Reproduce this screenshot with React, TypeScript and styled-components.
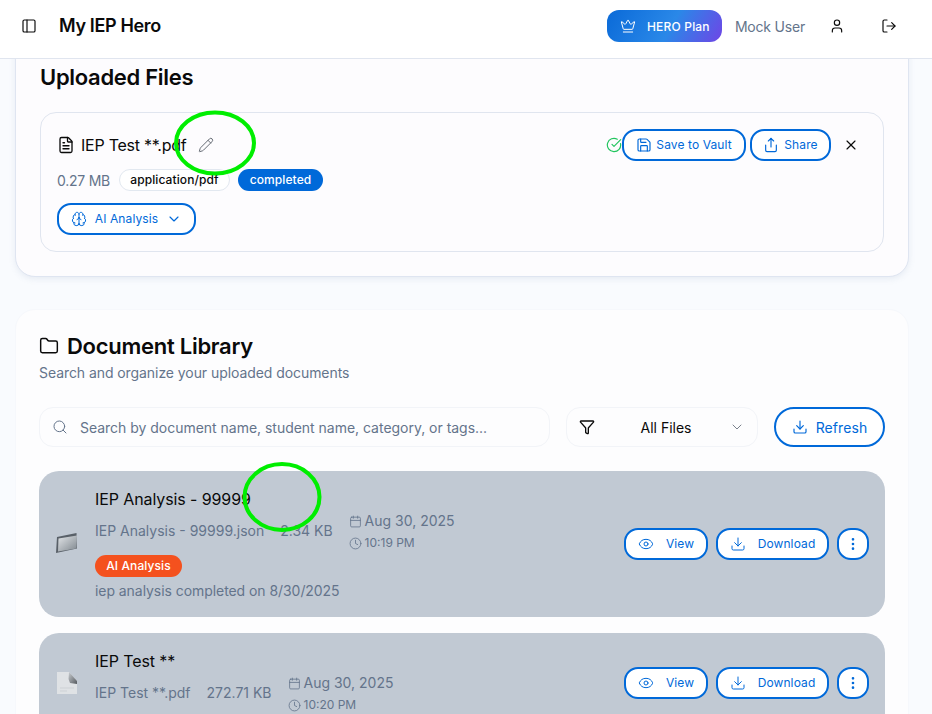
import React from "react";
import styled, { createGlobalStyle } from "styled-components";
import {
  PanelLeft, Crown, User, LogOut, FileText, Pencil, CircleCheckBig, Save, Share, X, Brain,
  ChevronDown, Folder, Search, Funnel, Download, Eye, EllipsisVertical, Calendar, Clock,
} from "lucide-react";

const Global = createGlobalStyle`
  html, body { margin: 0; padding: 0; height: 100%; }
  body { font-family: Inter, "Liberation Sans", sans-serif; background: #f9fbfe; color: #0a0a0a; overflow: hidden; }
  * { box-sizing: border-box; }
`;

const Page = styled.div`
  position: relative;
  width: 932px;
  height: 714px;
  overflow: hidden;
  display: flex;
  flex-direction: column;
`;

const Header = styled.header`
  height: 59px;
  flex: none;
  background: #fff;
  border-bottom: 1px solid #e0e5ef;
  display: flex;
  align-items: center;
  padding: 0 0 6px 21px;
  position: relative;
  z-index: 2;
`;
const HeaderTitle = styled.h1`
  margin: 0 0 0 22px;
  font-size: 18px;
  line-height: 28px;
  font-weight: 600;
  letter-spacing: -0.35px;
  flex: 1;
`;
const PlanPill = styled.div`
  width: 115px;
  height: 32px;
  border-radius: 12px;
  background: linear-gradient(120deg, #0a6ad8 0%, #2a88e8 55%, #6f45e6 100%);
  color: #fff;
  font-size: 12px;
  font-weight: 500;
  letter-spacing: 0.2px;
  display: flex;
  align-items: center;
  padding-left: 13px;
  gap: 11px;
`;
const UserName = styled.span`
  margin-left: 13px;
  font-size: 14px;
  letter-spacing: -0.2px;
  color: #64748b;
`;
const HeaderIcon = styled.span<{ $left: number }>`
  display: flex;
  margin-left: ${(p) => p.$left}px;
`;

const Main = styled.main`
  flex: 1;
  min-height: 0;
  overflow: hidden;
  padding: 0 23px 0 15px;
`;

const UploadCard = styled.section`
  margin-top: -24px;
  height: 242px;
  background: #fdfcfe;
  border: 1px solid #dfe5f1;
  border-radius: 20px;
  box-shadow: 0 2px 6px rgba(120, 140, 180, 0.14);
  padding: 24px;
`;
const UploadTitle = styled.h2`
  margin: 3px 0 21px;
  font-size: 22px;
  line-height: 28px;
  font-weight: 600;
  letter-spacing: -0.3px;
`;
const FileCard = styled.div`
  height: 140px;
  border: 1px solid #e0e5ef;
  border-radius: 16px;
  padding: 16px;
  display: flex;
  flex-direction: column;
`;
const FileTop = styled.div`
  display: flex;
  align-items: center;
  height: 32px;
`;
const FileName = styled.span`
  margin-left: 6px;
  font-size: 16px;
  line-height: 24px;
  font-weight: 400;
  letter-spacing: -0.25px;
`;
const EditIcon = styled.span`
  display: flex;
  margin-left: 12px;
  color: #666c75;
`;
const Spacer = styled.div`
  flex: 1;
`;
const OutlineBtn = styled.button<{ $w: number; $h?: number; $gap?: number; $r?: number; $fs?: number }>`
  width: ${(p) => p.$w}px;
  height: ${(p) => p.$h ?? 32}px;
  flex: none;
  background: #fff;
  border: 2px solid #0069d9;
  border-radius: ${(p) => p.$r ?? 14}px;
  color: #0069d9;
  font-family: inherit;
  font-size: ${(p) => p.$fs ?? 12}px;
  font-weight: 400;
  letter-spacing: 0.1px;
  display: flex;
  align-items: center;
  justify-content: center;
  gap: ${(p) => p.$gap ?? 6}px;
  padding: 0;
`;
const BtnLabel = styled.span`
  margin-bottom: 2px;
`;
const BtnRow = styled.div`
  display: flex;
  align-items: center;
  gap: 4px;
`;
const CloseIcon = styled.span`
  display: flex;
  margin: 0 8px 0 12px;
`;
const FileMeta = styled.div`
  margin-top: 8px;
  height: 22px;
  display: flex;
  align-items: center;
`;
const SizeText = styled.span`
  font-size: 14px;
  letter-spacing: -0.25px;
  color: #64748b;
  margin-right: 9px;
`;
const Badge = styled.span<{ $bg: string; $fg: string; $line?: string; $w: number; $ml?: number }>`
  width: ${(p) => p.$w}px;
  height: 22px;
  flex: none;
  margin-left: ${(p) => p.$ml ?? 0}px;
  padding-bottom: 2px;
  border-radius: 11px;
  background: ${(p) => p.$bg};
  color: ${(p) => p.$fg};
  border: ${(p) => (p.$line ? `1px solid ${p.$line}` : "none")};
  font-size: 12px;
  font-weight: 500;
  letter-spacing: 0.1px;
  display: flex;
  align-items: center;
  justify-content: center;
`;
const AnalysisBtn = styled(OutlineBtn)`
  margin-top: 12px;
`;

const LibraryCard = styled.section`
  margin-top: 32px;
  background: #fdfdfe;
  border: 1px solid #f6f8fc;
  border-radius: 20px;
  padding: 22px 23px 0;
  height: 460px;
`;
const LibraryHead = styled.div`
  display: flex;
  align-items: center;
  gap: 8px;
  height: 28px;
`;
const LibraryTitle = styled.h2`
  margin: 0;
  font-size: 22px;
  line-height: 28px;
  font-weight: 600;
  letter-spacing: -0.27px;
`;
const LibrarySub = styled.p`
  margin: 3px 0 0;
  font-size: 14px;
  line-height: 20px;
  letter-spacing: -0.07px;
  color: #64748b;
`;
const Toolbar = styled.div`
  margin-top: 24px;
  display: flex;
  align-items: center;
  gap: 16px;
`;
const SearchBox = styled.div`
  width: 511px;
  height: 40px;
  border: 1px solid #f2f4f8;
  border-radius: 14px;
  background: #fdfdfe;
  display: flex;
  align-items: center;
  padding-left: 12px;
  gap: 12px;
  color: #64748b;
  font-size: 14px;
  letter-spacing: -0.02px;
`;
const SelectBox = styled.div`
  width: 192px;
  height: 40px;
  border: 1px solid #f2f4f8;
  border-radius: 14px;
  background: #fdfdfe;
  display: flex;
  align-items: center;
  padding: 0 12px;
  font-size: 14px;
  font-weight: 400;
  color: #0a0a0a;
`;
const SelectLabel = styled.span`
  flex: 1;
  text-align: center;
  padding-left: 8px;
`;
const Rows = styled.div`
  margin-top: 24px;
  display: flex;
  flex-direction: column;
  gap: 16px;
`;
const DocRow = styled.article`
  background: #c1c9d3;
  border-radius: 20px;
  padding: 16px;
  display: flex;
  align-items: center;
  flex: none;
`;
const Thumb = styled.div`
  width: 24px;
  flex: none;
  margin-right: 16px;
  display: flex;
`;
const DocBody = styled.div`
  flex: 1;
  min-width: 0;
  display: flex;
  flex-direction: column;
  align-items: flex-start;
`;
const DocTitle = styled.div`
  font-size: 16px;
  line-height: 24px;
  letter-spacing: -0.1px;
`;
const DocMeta = styled.div`
  height: 44px;
  display: flex;
  align-items: center;
  gap: 16px;
  font-size: 14px;
  color: #64748b;
`;
const DocFile = styled.span`
  margin-bottom: 6px;
`;
const DateCol = styled.div`
  display: flex;
  flex-direction: column;
  gap: 2px;
  margin-bottom: 2px;
`;
const DateLine = styled.div<{ $small?: boolean }>`
  display: flex;
  align-items: center;
  gap: 3px;
  line-height: 20px;
  font-size: ${(p) => (p.$small ? 12 : 14)}px;
`;
const DocNote = styled.div`
  margin-top: 4px;
  font-size: 14px;
  line-height: 20px;
  letter-spacing: -0.06px;
  color: #64748b;
`;
const Actions = styled.div`
  display: flex;
  align-items: center;
  gap: 8px;
  flex: none;
`;
const Annotation = styled.svg`
  position: absolute;
  left: 0;
  top: 0;
  width: 932px;
  height: 714px;
  pointer-events: none;
  z-index: 3;
`;

const FolderThumb = () => (
  <svg width="24" height="24" viewBox="0 0 24 24">
    <defs>
      <linearGradient id="fg" x1="0" y1="0" x2="1" y2="1">
        <stop offset="0" stopColor="#e2e5e8" />
        <stop offset="1" stopColor="#7f878e" />
      </linearGradient>
    </defs>
    <path d="M2 5 L21.5 1 L22 16.5 L1 21 Z" fill="#596068" />
    <path d="M3.5 6.5 L22 3.5 L21.5 16.5 L3 19.5 Z" fill="url(#fg)" />
  </svg>
);
const PageThumb = () => (
  <svg width="24" height="24" viewBox="0 0 24 24">
    <defs>
      <linearGradient id="pc" x1="0" y1="0" x2="1" y2="1">
        <stop offset="0" stopColor="#c9cdd1" />
        <stop offset="1" stopColor="#555a5f" />
      </linearGradient>
    </defs>
    <path d="M2 1 H14 L22 10 V23 H2 Z" fill="#dfe2e5" />
    <path d="M14 1 L22 10 L22 13 L15 12 L13.5 8 Z" fill="url(#pc)" />
    <path d="M5 17 H19 M5 20 H12" stroke="#cdd1d5" strokeWidth="1" />
  </svg>
);

type Doc = {
  title: string; file: string; size: string; date: string; time: string;
  badge?: string; note?: string; thumb: React.ReactNode;
};
const docs: Doc[] = [
  { title: "IEP Analysis - 99999", file: "IEP Analysis - 99999.json", size: "2.34 KB", date: "Aug 30, 2025", time: "10:19 PM",
    badge: "AI Analysis", note: "iep analysis completed on 8/30/2025", thumb: <FolderThumb /> },
  { title: "IEP Test **", file: "IEP Test **.pdf", size: "272.71 KB", date: "Aug 30, 2025", time: "10:20 PM", thumb: <PageThumb /> },
];

export default function App() {
  return (
    <Page>
      <Global />
      <Header>
        <PanelLeft size={16} strokeWidth={1.75} />
        <HeaderTitle>My IEP Hero</HeaderTitle>
        <PlanPill><Crown size={16} strokeWidth={1.5} />HERO Plan</PlanPill>
        <UserName>Mock User</UserName>
        <HeaderIcon $left={24}><User size={16} strokeWidth={1.75} /></HeaderIcon>
        <HeaderIcon $left={36}><LogOut size={16} strokeWidth={1.75} /></HeaderIcon>
        <HeaderIcon $left={35} />
      </Header>
      <Main>
        <UploadCard>
          <UploadTitle>Uploaded Files</UploadTitle>
          <FileCard>
            <FileTop>
              <FileText size={18} strokeWidth={1.75} />
              <FileName>IEP Test **.pdf</FileName>
              <EditIcon><Pencil size={16} strokeWidth={1.5} /></EditIcon>
              <Spacer />
              <CircleCheckBig size={16} strokeWidth={1.75} color="#22c55e" />
              <BtnRow>
                <OutlineBtn $w={124} $gap={4}><Save size={16} strokeWidth={1.75} /><BtnLabel>Save to Vault</BtnLabel></OutlineBtn>
                <OutlineBtn $w={81} $gap={5}><Share size={16} strokeWidth={1.75} /><BtnLabel>Share</BtnLabel></OutlineBtn>
              </BtnRow>
              <CloseIcon><X size={16} strokeWidth={1.75} /></CloseIcon>
            </FileTop>
            <FileMeta>
              <SizeText>0.27 MB</SizeText>
              <Badge $bg="#fff" $fg="#0a0a0a" $line="#e2e8f0" $w={111}>application/pdf</Badge>
              <Badge $bg="#0069d9" $fg="#fff" $w={85} $ml={8}>completed</Badge>
            </FileMeta>
            <AnalysisBtn $w={139} $gap={8}><Brain size={16} strokeWidth={1.5} /><BtnLabel>AI Analysis</BtnLabel><ChevronDown size={16} strokeWidth={1.75} /></AnalysisBtn>
          </FileCard>
        </UploadCard>
        <LibraryCard>
          <LibraryHead>
            <Folder size={20} strokeWidth={1.75} />
            <LibraryTitle>Document Library</LibraryTitle>
          </LibraryHead>
          <LibrarySub>Search and organize your uploaded documents</LibrarySub>
          <Toolbar>
            <SearchBox><Search size={16} strokeWidth={1.5} />Search by document name, student name, category, or tags...</SearchBox>
            <SelectBox>
              <Funnel size={16} strokeWidth={2} color="#0a0a0a" />
              <SelectLabel>All Files</SelectLabel>
              <ChevronDown size={16} strokeWidth={1.5} color="#7a818c" />
            </SelectBox>
            <OutlineBtn $w={111} $h={40} $r={20} $fs={14} $gap={8}><Download size={16} strokeWidth={1.75} />Refresh</OutlineBtn>
          </Toolbar>
          <Rows>
            {docs.map((d) => (
              <DocRow key={d.title}>
                <Thumb>{d.thumb}</Thumb>
                <DocBody>
                  <DocTitle>{d.title}</DocTitle>
                  <DocMeta>
                    <DocFile>{d.file}</DocFile>
                    <DocFile>{d.size}</DocFile>
                    <DateCol>
                      <DateLine><Calendar size={13} strokeWidth={1.5} />{d.date}</DateLine>
                      <DateLine $small><Clock size={13} strokeWidth={1.5} />{d.time}</DateLine>
                    </DateCol>
                  </DocMeta>
                  {d.badge && <Badge $bg="#f4511e" $fg="#fff" $w={87}>{d.badge}</Badge>}
                  {d.note && <DocNote>{d.note}</DocNote>}
                </DocBody>
                <Actions>
                  <OutlineBtn $w={84} $gap={12}><Eye size={16} strokeWidth={1.5} /><BtnLabel>View</BtnLabel></OutlineBtn>
                  <OutlineBtn $w={113} $gap={12}><Download size={16} strokeWidth={1.5} /><BtnLabel>Download</BtnLabel></OutlineBtn>
                  <OutlineBtn $w={32}><EllipsisVertical size={16} strokeWidth={2} /></OutlineBtn>
                </Actions>
              </DocRow>
            ))}
          </Rows>
        </LibraryCard>
      </Main>
      <Annotation viewBox="0 0 932 714">
        <ellipse cx="215" cy="143" rx="39" ry="30.5" fill="none" stroke="#00ee00" strokeWidth="4" />
        <ellipse cx="282" cy="497" rx="37.5" ry="33" fill="none" stroke="#00ee00" strokeWidth="4" />
      </Annotation>
    </Page>
  );
}
